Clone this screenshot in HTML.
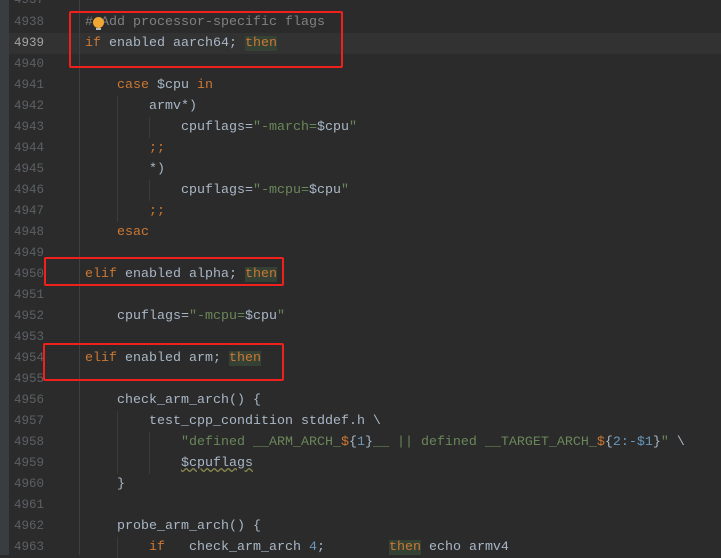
<!DOCTYPE html>
<html><head><meta charset="utf-8"><style>
body{margin:0;width:721px;height:555px;background:#2b2b2b;overflow:hidden;position:relative;font-family:"Liberation Mono",monospace;font-size:13.33px}
.strip{position:absolute;left:0;top:0;width:9px;height:555px;background:#3a3d3f}
.sep{position:absolute;left:79px;top:0;width:1px;height:555px;background:#3e4043}
.cur{position:absolute;left:9px;top:33px;width:712px;height:21px;background:#323232}
.n{position:absolute;left:14px;width:40px;color:#5c6063;height:21px;line-height:21px;font-size:12.5px}
.c{position:absolute;left:85px;white-space:pre;color:#a9b7c6;height:21px;line-height:21px}
.k{color:#cc7832}.s{color:#6a8759}.m{color:#808080}.b{color:#6897bb}
.t{color:#cc7832;background:#344134}
.g{position:absolute;width:1px;background:#3b3b3b}
.box{position:absolute;border:2px solid #f0201c;border-radius:2px}
</style></head><body>
<div class="strip"></div><div class="cur"></div><div class="sep"></div>
<div class="g" style="left:117px;top:96px;height:126px"></div>
<div class="g" style="left:149px;top:117px;height:21px"></div>
<div class="g" style="left:149px;top:180px;height:21px"></div>
<div class="g" style="left:117px;top:411px;height:63px"></div>
<div class="g" style="left:149px;top:432px;height:42px"></div>
<div class="g" style="left:117px;top:537px;height:21px"></div>
<div id="nums"></div>
<div class="n" style="top:-10px">4937</div>
<div class="n" style="top:12px">4938</div>
<div class="n" style="top:33px;color:#a4a3a3">4939</div>
<div class="n" style="top:54px">4940</div>
<div class="n" style="top:75px">4941</div>
<div class="n" style="top:96px">4942</div>
<div class="n" style="top:117px">4943</div>
<div class="n" style="top:138px">4944</div>
<div class="n" style="top:159px">4945</div>
<div class="n" style="top:180px">4946</div>
<div class="n" style="top:201px">4947</div>
<div class="n" style="top:222px">4948</div>
<div class="n" style="top:243px">4949</div>
<div class="n" style="top:264px">4950</div>
<div class="n" style="top:285px">4951</div>
<div class="n" style="top:306px">4952</div>
<div class="n" style="top:327px">4953</div>
<div class="n" style="top:348px">4954</div>
<div class="n" style="top:369px">4955</div>
<div class="n" style="top:390px">4956</div>
<div class="n" style="top:411px">4957</div>
<div class="n" style="top:432px">4958</div>
<div class="n" style="top:453px">4959</div>
<div class="n" style="top:474px">4960</div>
<div class="n" style="top:495px">4961</div>
<div class="n" style="top:516px">4962</div>
<div class="n" style="top:537px">4963</div>

<div class="c m" style="top:12px"># Add processor-specific flags</div>
<div style="position:absolute;left:93px;top:17px;width:11px;height:11px;border-radius:50%;background:#f0a732"></div>
<div style="position:absolute;left:96px;top:28px;width:5px;height:2px;background:#bbb"></div>
<div class="c" style="top:33px"><span class="k">if</span> enabled aarch64; <span class="t">then</span></div>
<div class="c" style="top:75px">    <span class="k">case</span> $cpu <span class="k">in</span></div>
<div class="c" style="top:96px">        armv*)</div>
<div class="c" style="top:117px">            cpuflags=<span class="s">"-march=</span>$cpu<span class="s">"</span></div>
<div class="c k" style="top:138px">        ;;</div>
<div class="c" style="top:159px">        *)</div>
<div class="c" style="top:180px">            cpuflags=<span class="s">"-mcpu=</span>$cpu<span class="s">"</span></div>
<div class="c k" style="top:201px">        ;;</div>
<div class="c k" style="top:222px">    esac</div>
<div class="c" style="top:264px"><span class="k">elif</span> enabled alpha; <span class="t">then</span></div>
<div class="c" style="top:306px">    cpuflags=<span class="s">"-mcpu=</span>$cpu<span class="s">"</span></div>
<div class="c" style="top:348px"><span class="k">elif</span> enabled arm; <span class="t">then</span></div>
<div class="c" style="top:390px">    check_arm_arch() {</div>
<div class="c" style="top:411px">        test_cpp_condition stddef.h \</div>
<div class="c" style="top:432px">            <span class="s">"defined __ARM_ARCH_<span class="k">$</span></span>{<span class="b">1</span>}<span class="s">__ || defined __TARGET_ARCH_<span class="k">$</span></span>{<span class="b">2:-$1</span>}<span class="s">"</span> \</div>
<div class="c" style="top:453px">            <span style="text-decoration:underline wavy #8a8a50">$cpuflags</span></div>
<div class="c" style="top:474px">    }</div>
<div class="c" style="top:516px">    probe_arm_arch() {</div>
<div class="c" style="top:537px">        <span class="k">if</span>   check_arm_arch <span class="b">4</span>;        <span class="t">then</span> echo armv4</div>

<div class="box" style="left:69px;top:11px;width:270px;height:53px"></div>
<div class="box" style="left:44px;top:257px;width:236px;height:25px"></div>
<div class="box" style="left:43px;top:343px;width:237px;height:34px"></div>
</body></html>
